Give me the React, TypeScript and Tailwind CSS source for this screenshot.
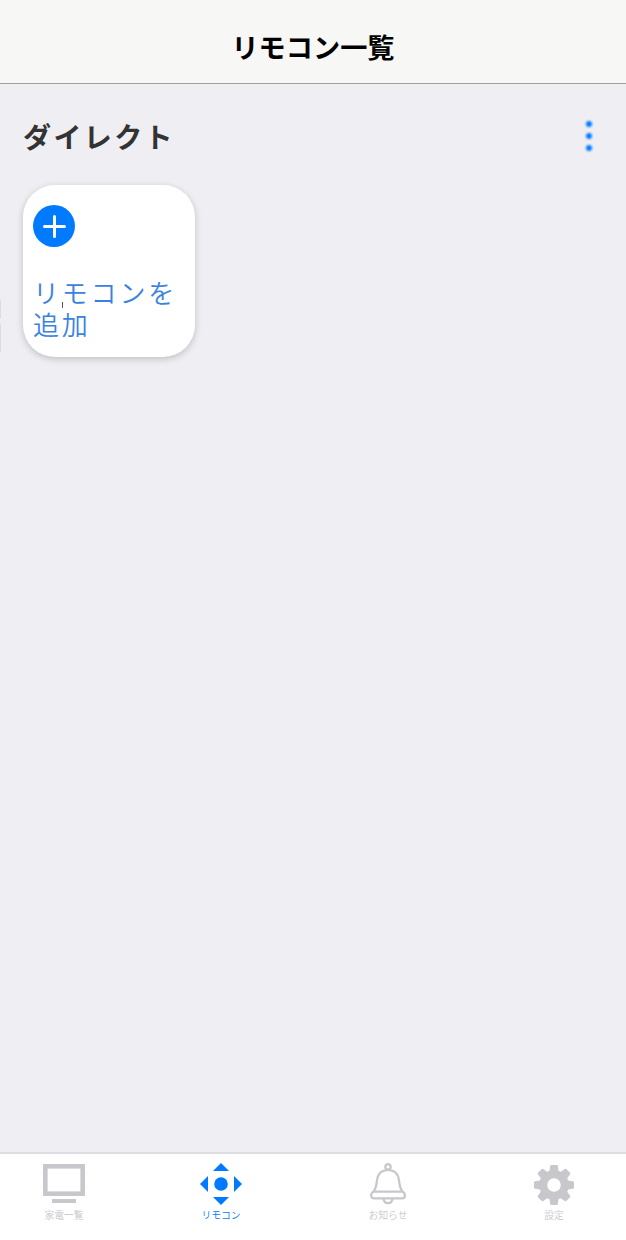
import type { ReactNode } from "react";

function TvIcon() {
  return (
    <svg width="44" height="44" viewBox="0 0 44 44" fill="none">
      <rect x="3.3" y="4.3" width="37.4" height="27.4" stroke="currentColor" strokeWidth="4.6" />
      <rect x="10" y="37" width="24" height="4" fill="currentColor" />
    </svg>
  );
}

function RemoteIcon() {
  return (
    <svg width="44" height="44" viewBox="0 0 44 44" fill="currentColor">
      <path d="M22 1l8 8H14zM22 43l8-8H14zM1 22l8-8v16zM43 22l-8-8v16z" />
      <circle cx="22" cy="22" r="6.8" />
    </svg>
  );
}

function BellIcon() {
  return (
    <svg width="44" height="44" viewBox="0 0 44 44" fill="none" stroke="currentColor" strokeWidth="2.2">
      <circle cx="22" cy="4.8" r="2.7" />
      <path d="M7.6 29.6C10.4 26 10.4 22.5 10.9 19C11.7 11.5 15.6 8 22 8s10.3 3.5 11.1 11c.5 3.5.5 7 3.3 10.6" />
      <path d="M7.6 29.6h28.8c3.2 1.6 3.6 6.8-.4 6.8H8c-4 0-3.6-5.2-.4-6.8z" />
      <path d="M17.6 36.6c.4 6 8.4 6 8.8 0" />
    </svg>
  );
}

const teeth = [0, 45, 90, 135, 180, 225, 270, 315];

function GearIcon() {
  return (
    <svg width="44" height="44" viewBox="0 0 44 44" fill="currentColor">
      <circle cx="22" cy="23" r="10.8" fill="none" stroke="currentColor" strokeWidth="8" />
      {teeth.map((a) => (
        <path
          key={a}
          d="M17.2 11l1-7q.2-1 1.2-1h5.2q1 0 1.2 1l1 7z"
          transform={`rotate(${a} 22 23)`}
        />
      ))}
    </svg>
  );
}

function Tab({ icon, label, active }: { icon: ReactNode; label: string; active?: boolean }) {
  return (
    <button
      className={`flex w-[60px] flex-col items-center ${active ? "text-[#007aff]" : "text-[#c7c7cc]"}`}
    >
      {icon}
      <span className="mt-[3px] text-[9.8px] leading-[12px] font-[350] whitespace-nowrap">{label}</span>
    </button>
  );
}

function App() {
  return (
    <div className="flex h-[1240px] w-[626px] flex-col overflow-hidden bg-[#efeef3] font-['Noto_Sans_CJK_JP',sans-serif]">
      <header className="flex h-[84px] shrink-0 items-center justify-center border-b border-[#a0a0a2] bg-[#f7f7f5] pt-[9px]">
        <h1 className="text-[27.2px] leading-[40px] font-bold text-black">リモコン一覧</h1>
      </header>

      <main className="relative flex-1">
        {/* edges of the page underneath */}
        <div className="absolute top-[216px] left-0 h-[18px] w-px bg-[#dcdce0]" />
        <div className="absolute top-[240px] left-0 h-[28px] w-px bg-[#dcdce0]" />

        <div className="flex h-[101px] items-center justify-between pt-[2px] pr-[34px] pl-[23px]">
          <h2 className="text-[28px] leading-[40px] font-bold tracking-[2.4px] text-[#333]">ダイレクト</h2>
          <button className="flex flex-col gap-[6px]">
            <span className="size-[6px] rounded-full bg-[#007aff] blur-[0.8px]" />
            <span className="size-[6px] rounded-full bg-[#007aff] blur-[0.8px]" />
            <span className="size-[6px] rounded-full bg-[#007aff] blur-[0.8px]" />
          </button>
        </div>

        <button className="relative ml-[23px] flex size-[172px] flex-col items-start rounded-[32px] bg-white pt-[20px] pl-[10px] text-left shadow-[0_2px_7px_rgba(0,0,0,0.2)]">
          <svg width="42" height="42" viewBox="0 0 42 42">
            <circle cx="21" cy="21" r="21" fill="#007aff" />
            <path d="M21.5 11.5v20M11.5 21.5h20" stroke="#fff" strokeWidth="3" strokeLinecap="round" />
          </svg>
          <span className="mt-[29px] text-[26px] leading-[32px] font-[350] tracking-[2.8px] whitespace-nowrap text-[#3b82e0]">
            リモコンを
            <br />
            追加
          </span>
          <span className="absolute top-[117px] left-[39px] h-[6px] w-px bg-[#555]" />
        </button>
      </main>

      <nav className="grid h-[88px] shrink-0 grid-cols-[157px_167px_166px_60px] items-start border-t-2 border-[#dddde0] bg-white pt-[8px] pl-[34px]">
        <Tab icon={<TvIcon />} label="家電一覧" />
        <Tab icon={<RemoteIcon />} label="リモコン" active />
        <Tab icon={<BellIcon />} label="お知らせ" />
        <Tab icon={<GearIcon />} label="設定" />
      </nav>
    </div>
  );
}

export default App;
